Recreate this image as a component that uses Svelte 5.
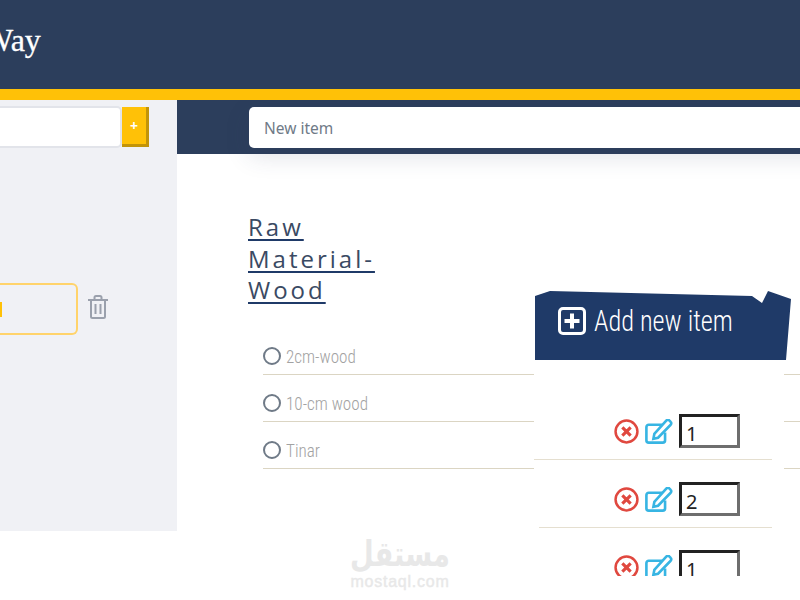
<script>
  const items = ['2cm-wood', '10-cm wood', 'Tinar'];
  const rows = [1, 2, 1];
</script>

<div class="page">
  <header class="top"><h1>Way</h1></header>
  <div class="band"></div>
  <div class="work">
    <aside class="side">
      <div class="add">
        <input class="cat" aria-label="Category" />
        <button class="plus">+</button>
      </div>
      <div class="catrow">
        <div class="catbox"><span class="tick"></span></div>
        <svg class="trash" viewBox="0 0 20 24" width="20" height="24" fill="none" stroke="#9aa0ac" stroke-width="2">
          <path d="M0 5h20M3 5v16.500a1.500 1.500 0 0 0 1.500 1.500h11a1.500 1.500 0 0 0 1.500-1.500V5M6.500 5V2.500A1.500 1.500 0 0 1 8 1h4a1.500 1.500 0 0 1 1.500 1.500V5M7.500 9v10M12.500 9v10" />
        </svg>
      </div>
    </aside>
    <main class="main">
      <div class="strip">
        <input class="newitem" placeholder="New item" />
      </div>
      <div class="content">
        <h2><span>Raw</span> <span>Material-</span> <span>Wood</span></h2>
        <ul>
          {#each items as item}
            <li><i class="radio"></i><span class="narrow label">{item}</span></li>
          {/each}
        </ul>
      </div>
    </main>
  </div>
  <footer class="foot">
    <div class="ar">مستقل</div>
    <div class="lat">mostaql.com</div>
  </footer>

  <section class="panel">
    <div class="phead">
      <svg viewBox="0 0 28 28" width="28" height="28" fill="none" stroke="#fff" stroke-width="3">
        <rect x="1.500" y="1.500" width="25" height="25" rx="3.500" />
        <path d="M14 6.500v15M6.500 14h15" stroke-width="4" />
      </svg>
      <span class="narrow ptitle">Add new item</span>
    </div>
    <div class="pbody">
      {#each rows as n, i}
        <div class="prow" class:inset={i === 1}>
          <svg viewBox="0 0 24 24" width="25" height="25" fill="none" stroke="#e0483f">
            <circle cx="12" cy="12" r="10.500" stroke-width="2.400" />
            <path d="M8 8l8 8M16 8l-8 8" stroke-width="3" />
          </svg>
          <svg viewBox="0 0 30 26" width="28" height="25" preserveAspectRatio="none" fill="none" stroke="#37b5e3" stroke-width="2.800">
            <path d="M19 6H4a2.500 2.500 0 0 0-2.500 2.500v13.500a2.500 2.500 0 0 0 2.500 2.500h15a2.500 2.500 0 0 0 2.500-2.500V14" />
            <path d="M10 15.500l-1 5 5-1L27.500 6a2 2 0 0 0 0-3l-1.500-1.500a2 2 0 0 0-3 0z" />
          </svg>
          <input class="qty" value={n} aria-label="Quantity" />
        </div>
      {/each}
    </div>
  </section>
</div>

<style>
  :global(body) { margin: 0; background: #fff; }
  .page { position: relative; width: 800px; height: 600px; overflow: hidden; display: flex; flex-direction: column; font-family: "Open Sans", sans-serif; }
  .top { height: 89px; flex: none; background: #2c3e5c; display: flex; align-items: center; overflow: hidden; }
  h1 { margin: 0 0 0 -17px; font: 400 32px/1 "Liberation Serif", serif; color: #fff; padding-bottom: 10px; -webkit-text-stroke: .3px #fff; }
  .band { height: 11px; flex: none; background: #ffc107; }
  .work { height: 431px; flex: none; display: flex; }
  .side { width: 177px; flex: none; background: #f0f1f5; }
  .add { display: flex; align-items: flex-start; gap: 0; padding-top: 6px; }
  .cat { width: 123px; height: 42px; box-sizing: border-box; margin-left: -1px; border: 2px solid #e2e4ea; border-left: 0; border-radius: 0 5px 5px 0; background: #fff; padding: 0; }
  .plus { width: 27px; height: 40px; margin-top: 1px; box-sizing: border-box; padding: 0; background: #ffc107; border: 0; border-right: 3px solid #c29409; border-bottom: 3px solid #c29409; color: #fff; font: 700 14px/1 "Open Sans", sans-serif; }
  .catrow { display: flex; align-items: center; gap: 10px; margin-top: 135px; }
  .catbox { width: 78px; height: 52px; box-sizing: border-box; border: 2px solid #ffd36b; border-left: 0; border-radius: 0 6px 6px 0; display: flex; align-items: center; }
  .tick { width: 2px; height: 15px; background: #ffc107; }
  .trash { margin-top: -4px; }
  .main { flex: 1; min-width: 0; background: #fff; overflow: hidden; }
  .strip { height: 54px; background: #2c3e5c; padding: 7px 0 0 72px; box-sizing: border-box; }
  .newitem { width: 620px; height: 41px; box-sizing: border-box; border: 0; border-radius: 5px; background: #fff; padding: 0 15px; font: 400 15.500px "Noto Sans", sans-serif; box-shadow: 0 8px 24px rgba(44, 62, 92, .15); }
  .newitem::placeholder { color: #6f7a87; opacity: 1; }
  .content { padding: 57px 0 0 71px; }
  h2 { margin: 0; width: 135px; font: 400 24px/31.500px "Open Sans", sans-serif; letter-spacing: 3px; color: #3a4a63; }
  h2 span { text-decoration: underline; text-decoration-color: #1f3a68; text-decoration-thickness: 1.500px; text-underline-offset: 3px; }
  ul { list-style: none; margin: 22.500px 0 0 15px; padding: 0; }
  li { height: 36px; padding-top: 10px; border-bottom: 1px solid #dbd5c3; display: flex; align-items: center; gap: 5px; color: #a2a2a2; font-size: 18px; }
  .radio { width: 14px; height: 14px; border: 2px solid #6f7a87; border-radius: 50%; flex: none; }
  .narrow { font-family: "Liberation Sans Narrow", "Roboto Condensed", Roboto, sans-serif; font-weight: 300; display: inline-block; transform-origin: left center; }
  .label { transform: scaleX(.95); }
  .foot { flex: 1; display: flex; flex-direction: column; align-items: center; color: #e8e8e8; }
  .ar { font: 700 35px/36px "DejaVu Sans", sans-serif; margin-top: 5px; transform: scaleX(.78); height: 38px; }
  .lat { font: 400 16px/15px "Liberation Sans", sans-serif; letter-spacing: .75px; -webkit-text-stroke: .4px #e8e8e8; }
  .panel { position: absolute; left: 535px; top: 291px; width: 256px; }
  .phead { height: 69px; box-sizing: border-box; background: #1f3a68; color: #fff; display: flex; align-items: center; gap: 8px; padding: 0 0 10px 23px; clip-path: polygon(0 5px, 15px 0, 217px 5px, 227px 12px, 233px 0, 256px 8px, 251px 69px, 0 69px); }
  .ptitle { font-size: 30px; transform: scaleX(.875); }
  .pbody { width: 250px; height: 216px; box-sizing: border-box; padding-top: 32px; background: #fff; overflow: hidden; margin-left: -1px; }
  .prow { width: 238px; height: 68px; box-sizing: border-box; border-bottom: 1px solid #e5dfd0; display: flex; align-items: flex-start; justify-content: flex-end; padding: 22px 32px 0 0; gap: 6px; }
  .prow svg { margin-top: 5px; flex: none; }
  .prow.inset { margin-left: 5px; width: 233px; }
  .qty { width: 61px; height: 34px; box-sizing: border-box; padding: 4px 0 0 4px; background: #fff; font: 400 20px "Noto Sans", sans-serif; color: #222; border: 3px solid; border-color: #222 #6e6e6e #6e6e6e #222; }
</style>
